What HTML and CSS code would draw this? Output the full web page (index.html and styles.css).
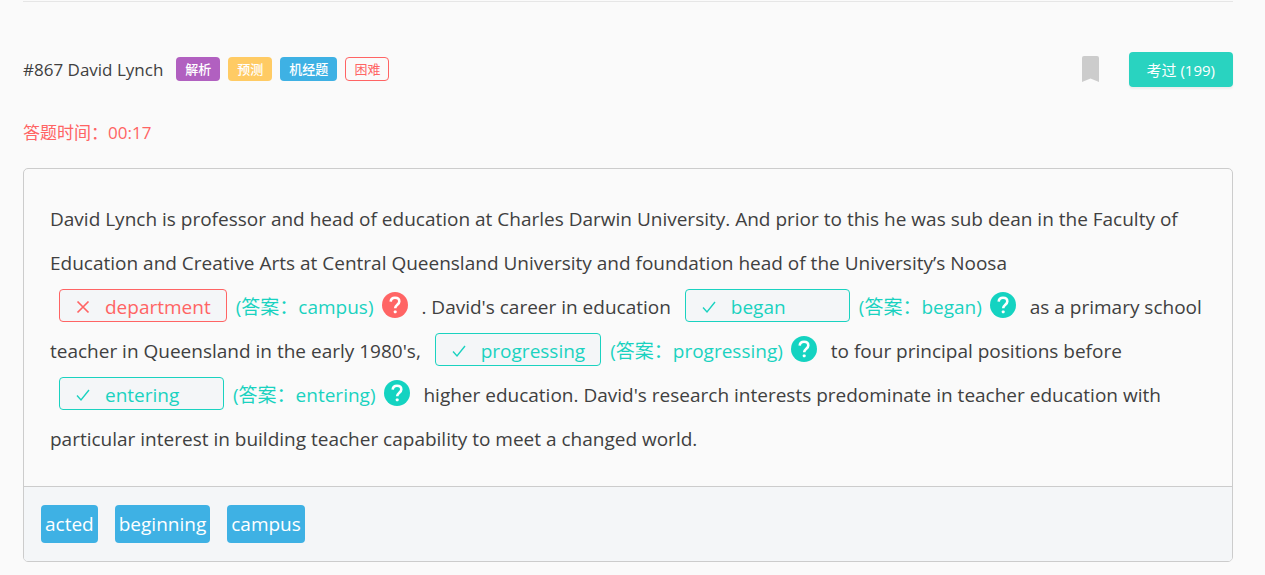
FILE: index.html
```html
<!DOCTYPE html>
<html lang="zh-CN">
<head>
<meta charset="utf-8">
<title>#867 David Lynch</title>
<link rel="stylesheet" href="styles.css">
</head>
<body>
<svg class="sprite" aria-hidden="true">
  <symbol id="help" viewBox="0 0 26 26">
    <circle cx="13" cy="13" r="13" fill="currentColor"/>
    <path d="M8.700 9.600C8.900 7.200 10.600 5.800 13 5.800c2.500 0 4.300 1.400 4.300 3.600 0 3.300-4.100 3.300-4.100 6.900" fill="none" stroke="#fff" stroke-width="2.600"/>
    <rect x="11.800" y="18.500" width="2.800" height="2.800" rx="0.800" fill="#fff"/>
  </symbol>
  <symbol id="check" viewBox="0 0 14 14">
    <path d="M1 7.500l4 4.500 8-10" fill="none" stroke="currentColor" stroke-width="1.400"/>
  </symbol>
  <symbol id="cross" viewBox="0 0 14 14">
    <path d="M1.500 1.500l11 11m0-11l-11 11" fill="none" stroke="currentColor" stroke-width="1.700"/>
  </symbol>
</svg>
<main class="page">
  <header class="head">
    <h1 class="title">#867 David Lynch</h1>
    <div class="tags">
      <span class="tag purple">解析</span>
      <span class="tag yellow">预测</span>
      <span class="tag blue">机经题</span>
      <span class="tag outline">困难</span>
    </div>
    <button class="bookmark" type="button" aria-label="收藏"><svg width="17" height="26" viewBox="0 0 17 26"><path d="M2 0h13q2 0 2 2v24l-8.500-3.500L0 26V2q0-2 2-2z" fill="#ccc"/></svg></button>
    <button class="done" type="button">考过 (199)</button>
  </header>
  <p class="timer">答题时间：00:17</p>
  <section class="card">
    <p class="passage">David Lynch is professor and head of education at Charles Darwin University. And prior to this he was sub dean in the Faculty of Education and Creative Arts at Central Queensland University and foundation head of the University’s Noosa <span class="item"><span class="slot wrong"><svg class="mark"><use href="#cross"/></svg>department</span><span class="answer">(答案：campus)</span><button class="help wrong" type="button" aria-label="解析"><svg><use href="#help"/></svg></button></span> . David's career in education <span class="item"><span class="slot"><svg class="mark"><use href="#check"/></svg>began</span><span class="answer">(答案：began)</span><button class="help" type="button" aria-label="解析"><svg><use href="#help"/></svg></button></span> as a primary school teacher in Queensland in the early 1980's, <span class="item"><span class="slot"><svg class="mark"><use href="#check"/></svg>progressing</span><span class="answer">(答案：progressing)</span><button class="help" type="button" aria-label="解析"><svg><use href="#help"/></svg></button></span> to four principal positions before <span class="item"><span class="slot"><svg class="mark"><use href="#check"/></svg>entering</span><span class="answer">(答案：entering)</span><button class="help" type="button" aria-label="解析"><svg><use href="#help"/></svg></button></span> higher education. David's research interests predominate in teacher education with particular interest in building teacher capability to meet a changed world.</p>
    <div class="bank">
      <button class="word" type="button">acted</button>
      <button class="word" type="button">beginning</button>
      <button class="word" type="button">campus</button>
    </div>
  </section>
</main>
</body>
</html>
```
FILE: styles.css
```css
* { box-sizing: border-box; }
body {
  margin: 0;
  background: #fafafa;
  color: #404040;
  font-family: "Segoe UI", "Open Sans", "Noto Sans CJK SC", sans-serif;
}
button {
  border: 0;
  padding: 0;
  background: none;
  font: inherit;
  cursor: pointer;
}
.sprite { position: absolute; width: 0; height: 0; }
.page {
  margin: 1px 32px 0 23px;
  border-top: 1px solid #e6e6e6;
}
.head {
  display: flex;
  align-items: center;
  padding-top: 50px;
}
.title { margin: 0; font-size: 17px; font-weight: 400; line-height: 24px; }
.tags { display: flex; gap: 8px; margin: 0 0 2px 13px; }
.tag {
  height: 24px;
  padding: 0 9px;
  border-radius: 4px;
  font-size: 13px;
  font-weight: 500;
  line-height: 24px;
  color: #fff;
}
.purple { background: #b160c0; }
.yellow { background: #ffcb64; }
.blue { background: #3eb1e4; }
.outline {
  padding: 0 8px;
  border: 1px solid #ff6464;
  line-height: 22px;
  font-weight: 400;
  color: #ff6464;
}
.bookmark { display: flex; margin: 0 0 2px auto; }
.done {
  height: 35px;
  margin-left: 30px;
  padding: 0 18px;
  border-radius: 4px;
  background: #29d3c0;
  box-shadow: 0 2px 2px rgba(0, 0, 0, 0.05);
  color: #fff;
  font-size: 15px;
}
.timer {
  margin: 32px 0 21px;
  font-size: 17px;
  line-height: 28px;
  color: #ff6464;
}
.card {
  overflow: hidden;
  border: 1px solid #ccc;
  border-radius: 5px;
}
.passage {
  margin: 0;
  padding: 28px 26px 25px;
  font-size: 19px;
  line-height: 44px;
}
.item { white-space: nowrap; color: #1ad2c0; }
.slot {
  display: inline-flex;
  align-items: center;
  min-width: 165px;
  height: 33px;
  margin: 0 9px;
  padding: 3px 15px 0 16px;
  border: 1px solid #1ad2c0;
  border-radius: 4px;
  background: #f4f6f8;
  line-height: 28px;
}
.slot.wrong { border-color: #ff6464; color: #ff6464; }
.mark { width: 14px; height: 14px; margin-right: 15px; }
.help {
  margin: 0 9px 0 8px;
  color: #14d3c1;
  vertical-align: -4px;
  line-height: 0;
}
.help.wrong { color: #ff6464; }
.help svg { display: block; width: 26px; height: 26px; }
.bank {
  display: flex;
  gap: 17px;
  padding: 18px 17px;
  border-top: 1px solid #ccc;
  background: #f4f6f8;
}
.word {
  height: 38px;
  padding: 0 4px;
  border-radius: 4px;
  background: #3eb1e4;
  color: #fff;
  font-size: 19px;
}
```
